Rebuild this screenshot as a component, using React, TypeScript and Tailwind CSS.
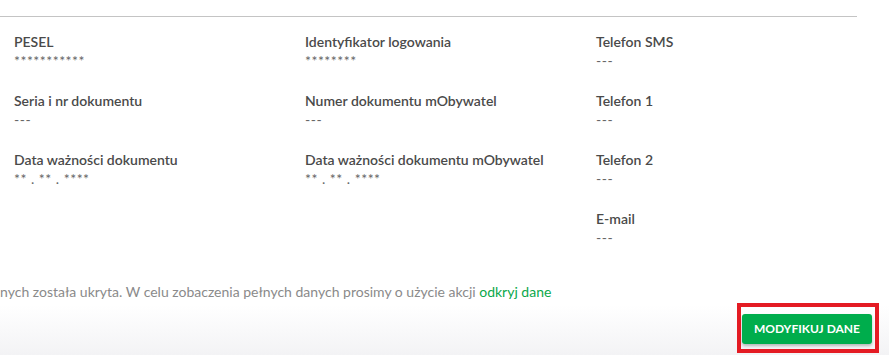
const fields: { label: string; value: string }[][] = [
  [
    { label: 'PESEL', value: '***********' },
    { label: 'Seria i nr dokumentu', value: '---' },
    { label: 'Data ważności dokumentu', value: '** . ** . ****' },
  ],
  [
    { label: 'Identyfikator logowania', value: '********' },
    { label: 'Numer dokumentu mObywatel', value: '---' },
    { label: 'Data ważności dokumentu mObywatel', value: '** . ** . ****' },
  ],
  [
    { label: 'Telefon SMS', value: '---' },
    { label: 'Telefon 1', value: '---' },
    { label: 'Telefon 2', value: '---' },
    { label: 'E-mail', value: '---' },
  ],
]

function Field({ label, value }: { label: string; value: string }) {
  return (
    <div className="h-[59px]">
      <p className="text-[14px] leading-[18px] font-semibold text-[#4a4a4a]">{label}</p>
      <p className="mt-[1px] text-[14px] leading-[18px] tracking-[0.5px] text-[#666]">{value}</p>
    </div>
  )
}

export default function App() {
  return (
    <div className="relative h-[355px] w-[889px] overflow-hidden bg-white font-['Lato',sans-serif]">
      <div className="pt-4">
        <div className="h-px w-[857px] bg-[#c4c4c4]" />
      </div>

      <div className="grid grid-cols-[291px_291px_1fr] pl-[14px] pt-[16px]">
        {fields.map((col, i) => (
          <div key={i}>
            {col.map((f) => (
              <Field key={f.label} label={f.label} value={f.value} />
            ))}
          </div>
        ))}
      </div>

      <p className="-ml-[54px] mt-[14px] whitespace-nowrap text-[14px] leading-[18px] text-[#8a8a8a]">
        Część danych została ukryta. W celu zobaczenia pełnych danych prosimy o użycie akcji{' '}
        <a className="text-[#0aa84b]">odkryj dane</a>
      </p>

      <div className="absolute inset-x-0 bottom-0 flex h-[50px] items-end justify-end bg-gradient-to-b from-white to-[#f3f3f5] pr-[10px] pb-[2px]">
        <div className="border-4 border-[#e41b23] pt-[7px] pb-[5px] pl-[1px] pr-[3px]">
          <button className="h-[30px] w-[130px] rounded-[3px] bg-[#00ad4c] text-[12px] font-bold text-white shadow-[0_2px_3px_rgba(0,0,0,0.25)]">
            MODYFIKUJ DANE
          </button>
        </div>
      </div>
    </div>
  )
}
